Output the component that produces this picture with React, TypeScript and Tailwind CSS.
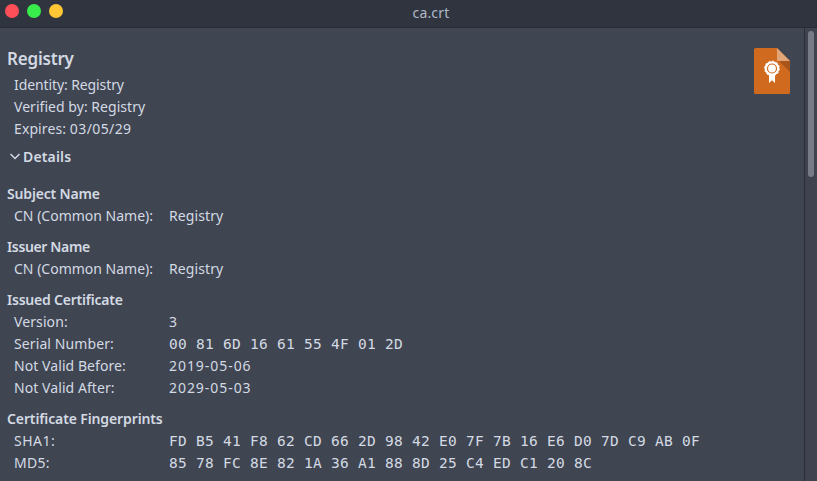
type Entry = { label: string; value: string; labelClass: string; valueClass: string };
type Group = { title: string; titleClass: string; rows: Entry[] };

const mono = "font-['DejaVu_Sans_Mono',monospace] text-[14.500px] tracking-[0.271px]";
const date = "tracking-[0.95px]";

const groups: Group[] = [
  {
    title: "Subject Name",
    titleClass: "tracking-[-0.17px]",
    rows: [{ label: "CN (Common Name):", value: "Registry", labelClass: "", valueClass: "tracking-[0.1px]" }],
  },
  {
    title: "Issuer Name",
    titleClass: "tracking-[-0.35px]",
    rows: [{ label: "CN (Common Name):", value: "Registry", labelClass: "", valueClass: "tracking-[0.1px]" }],
  },
  {
    title: "Issued Certificate",
    titleClass: "tracking-[-0.22px]",
    rows: [
      { label: "Version:", value: "3", labelClass: "tracking-[0.1px]", valueClass: "" },
      { label: "Serial Number:", value: "00 81 6D 16 61 55 4F 01 2D", labelClass: "tracking-[0.1px]", valueClass: mono },
      { label: "Not Valid Before:", value: "2019-05-06", labelClass: "tracking-[0.07px]", valueClass: date },
      { label: "Not Valid After:", value: "2029-05-03", labelClass: "tracking-[0.07px]", valueClass: date },
    ],
  },
  {
    title: "Certificate Fingerprints",
    titleClass: "tracking-[-0.12px]",
    rows: [
      {
        label: "SHA1:",
        value: "FD B5 41 F8 62 CD 66 2D 98 42 E0 7F 7B 16 E6 D0 7D C9 AB 0F",
        labelClass: "tracking-[0.5px]",
        valueClass: mono,
      },
      {
        label: "MD5:",
        value: "85 78 FC 8E 82 1A 36 A1 88 8D 25 C4 ED C1 20 8C",
        labelClass: "tracking-[0.3px]",
        valueClass: mono,
      },
    ],
  },
];

function CertificateIcon() {
  return (
    <svg width="36" height="46" viewBox="0 0 36 46" className="mt-5 mr-3.5 shrink-0">
      <path d="M1.500 0H23l13 13v31.500a1.500 1.500 0 0 1-1.500 1.500h-33A1.500 1.500 0 0 1 0 44.500v-43A1.500 1.500 0 0 1 1.500 0z" fill="#cf6a1e" />
      <path d="M24.500 12.500H36V24z" fill="#a75518" />
      <path d="M23 0l13 13H24a1 1 0 0 1-1-1z" fill="#e2a578" />
      <path d="M15 26h6v9l-3-2.700-3 2.700z" fill="#fff" />
      <circle cx="18" cy="20.500" r="7.300" fill="#fff" />
      <circle cx="18" cy="20.500" r="7.400" fill="none" stroke="#fff" strokeDasharray="2 1.870" />
      <circle cx="18" cy="20.500" r="4.500" fill="none" stroke="#cf6a1e" strokeWidth="1.200" />
    </svg>
  );
}

function TitleBar() {
  return (
    <header className="flex h-7 shrink-0 border-b border-[#282b35] bg-[#2f343f]">
      <div className="flex w-[45px] shrink-0 gap-2 pt-1 pl-[5px]">
        <span className="size-3.5 shrink-0 rounded-full bg-[#fc4f57]" />
        <span className="size-3.5 shrink-0 rounded-full bg-[#38ed4b]" />
        <span className="size-3.5 shrink-0 rounded-full bg-[#fec735]" />
      </div>
      <h1 className="flex-1 text-center text-[14px] leading-[26px] tracking-[0.15px] text-[#afb8c6]">ca.crt</h1>
    </header>
  );
}

export default function App() {
  return (
    <div className="flex h-[481px] w-[817px] flex-col overflow-hidden bg-[#404552] font-['Noto_Sans',sans-serif] text-[14px] leading-[22px] text-[#d3dae3]">
      <TitleBar />
      <div className="flex min-h-0 flex-1">
        <main className="flex min-w-0 flex-1 justify-between overflow-hidden whitespace-nowrap">
          <div className="pl-[7px]">
            <h2 className="mt-[19px] mb-[3px] text-[17px] leading-6 font-semibold tracking-[-0.2px]">Registry</h2>
            <div className="pl-[7px]">
              <p className="tracking-[-0.1px]">Identity: Registry</p>
              <p className="tracking-[0.04px]">Verified by: Registry</p>
              <p className="tracking-[0.1px]">
                Expires: <span className="tracking-[0.4px]">03/05/29</span>
              </p>
            </div>
            <div className="mt-1.5 mb-[15px] flex items-center gap-[3px] pl-[3px] font-semibold">
              <svg width="10" height="8" viewBox="0 0 10 8" fill="none" stroke="#d3dae3" strokeWidth="1.500">
                <path d="M.5 1l4.500 4.500L9.500 1" />
              </svg>
              <span className="tracking-[0.15px]">Details</span>
            </div>
            {groups.map((group) => (
              <section key={group.title} className="mb-[9px]">
                <h3 className={`font-semibold ${group.titleClass}`}>{group.title}</h3>
                {group.rows.map((row) => (
                  <div key={row.label} className="flex h-[22px] pl-[7px]">
                    <span className={`w-[155px] ${row.labelClass}`}>{row.label}</span>
                    <span className={row.valueClass}>{row.value}</span>
                  </div>
                ))}
              </section>
            ))}
          </div>
          <CertificateIcon />
        </main>
        <aside className="w-[13px] border-l border-[#2b2e39] bg-[#3e434f] pt-[3px] pl-[3px]">
          <div className="h-[146px] w-1.5 rounded-full bg-[#767b87]" />
        </aside>
      </div>
    </div>
  );
}
